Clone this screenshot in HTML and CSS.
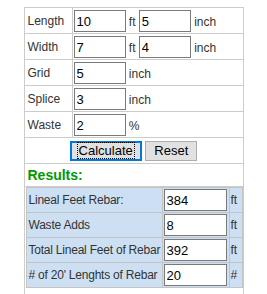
FILE: index.html
```html
<!DOCTYPE html>
<html>
<head>
<meta charset="utf-8">
<link rel="stylesheet" href="styles.css">
</head>
<body>
<table class="calc">
  <tr>
    <td class="lbl">Length</td>
    <td class="fld"><input class="num" value="10"> ft <input class="num" value="5"> inch</td>
  </tr>
  <tr>
    <td class="lbl">Width</td>
    <td class="fld"><input class="num" value="7"> ft <input class="num" value="4"> inch</td>
  </tr>
  <tr>
    <td class="lbl">Grid</td>
    <td class="fld"><input class="num" value="5"> inch</td>
  </tr>
  <tr>
    <td class="lbl">Splice</td>
    <td class="fld"><input class="num" value="3"> inch</td>
  </tr>
  <tr>
    <td class="lbl">Waste</td>
    <td class="fld"><input class="num" value="2"> %</td>
  </tr>
  <tr>
    <td colspan="2" class="btns"><button class="btn btn-calc"><span class="focus">Calculate</span></button> <button class="btn btn-reset">Reset</button></td>
  </tr>
  <tr>
    <td colspan="2" class="res-title">Results:</td>
  </tr>
  <tr>
    <td colspan="2" class="res-cell">
      <table class="results">
        <tr><td class="rl">Lineal Feet Rebar:</td><td class="rv"><input class="out" value="384"></td><td class="ru">ft</td></tr>
        <tr><td class="rl">Waste Adds</td><td class="rv"><input class="out" value="8"></td><td class="ru">ft</td></tr>
        <tr><td class="rl">Total Lineal Feet of Rebar</td><td class="rv"><input class="out" value="392"></td><td class="ru">ft</td></tr>
        <tr><td class="rl"># of 20' Lenghts of Rebar</td><td class="rv"><input class="out" value="20"></td><td class="ru">#</td></tr>
      </table>
    </td>
  </tr>
</table>
</body>
</html>
```

FILE: styles.css
```css
body {
  margin: 0;
  padding-top: 7px;
  background: #fff;
  font-family: "Liberation Sans", Arial, sans-serif;
}

.calc {
  margin: 0 auto;
  width: 220px;
  border-collapse: collapse;
  table-layout: fixed;
}

.calc > tbody > tr > td {
  border: 1px solid #cccccc;
  padding: 0;
  height: 25px;
  color: #333;
  font-size: 12px;
  white-space: nowrap;
}

.calc > tbody > tr > td.lbl {
  width: 44px;
  padding-left: 3px;
}

.calc > tbody > tr > td.fld {
  padding-left: 1px;
}

.num, .out {
  box-sizing: border-box;
  height: 22px;
  margin: 0;
  padding: 1px 2px 0;
  border: 1px solid #7a7a7a;
  background: #fff;
  color: #000;
  font: 13px "Liberation Sans", Arial, sans-serif;
  vertical-align: baseline;
}

.num {
  width: 52px;
}

.calc > tbody > tr > td.btns {
  text-align: center;
  font-size: 13px;
}

.btn {
  box-sizing: border-box;
  height: 20px;
  margin: 0;
  padding: 0;
  background: #e1e1e1;
  border: 1px solid #adadad;
  color: #000;
  font: 13px "Liberation Sans", Arial, sans-serif;
  vertical-align: middle;
}

.btn-calc {
  width: 72px;
  border: 2px solid #0078d7;
}

.focus {
  outline: 1px dotted #000;
  padding: 0 1px;
}

.btn-reset {
  width: 52px;
}

.calc > tbody > tr > td.res-title {
  height: 22px;
  padding-left: 3px;
  color: #009a00;
  font-size: 14px;
  font-weight: bold;
}

.calc > tbody > tr > td.res-cell {
  padding: 0 0 12px 1px;
  height: auto;
}

.results {
  width: 100%;
  border-collapse: collapse;
  table-layout: fixed;
  background: #cde0f3;
}

.results td {
  border: 1px solid #c4c4c4;
  height: 24px;
  padding: 0;
  color: #333;
  font-size: 12px;
  white-space: nowrap;
}

.results td.rl {
  padding-left: 2px;
  letter-spacing: -0.22px;
}

.results td.rv {
  width: 65px;
  padding-left: 1px;
}

.results td.ru {
  width: 11px;
  padding-left: 1px;
}

.out {
  width: 63px;
}
```
